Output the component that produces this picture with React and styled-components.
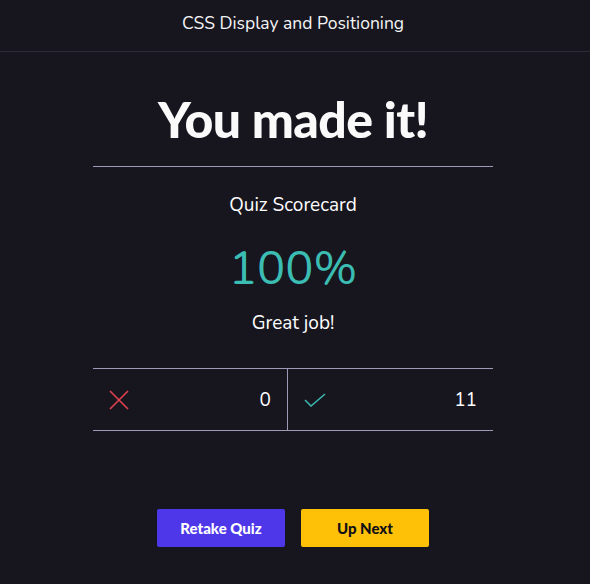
import React from "react";
import styled, { createGlobalStyle } from "styled-components";

const Global = createGlobalStyle`
  html, body { margin: 0; padding: 0; background: #17161f; }
  body { font-family: "Nunito", Lato, "Noto Sans", sans-serif; color: #fff; }
  * { box-sizing: border-box; }
`;

const Page = styled.div`
  min-height: 584px;
  background: #17161f;
`;

const Header = styled.header`
  height: 52px;
  border-bottom: 1px solid #2c2b36;
  display: flex;
  align-items: center;
  justify-content: center;
  font-size: 17.5px;
  color: #f4f4f6;
  padding: 0 4px 5px 0;
`;

const Body = styled.div`
  padding-right: 4px;
`;

const Main = styled.main`
  width: 400px;
  margin: 0 auto;
  display: flex;
  flex-direction: column;
  align-items: stretch;
  text-align: center;
`;

const Title = styled.h1`
  margin: 36px 0 0;
  font-family: Lato, sans-serif;
  font-weight: 900;
  font-size: 50px;
  line-height: 62px;
  letter-spacing: -0.6px;
  color: #fafafa;
  padding-bottom: 16px;
  border-bottom: 1px solid #9d9bb8;
`;

const Subtitle = styled.div`
  margin-top: 26px;
  font-size: 19px;
  line-height: 24px;
`;

const Percent = styled.div`
  margin-top: 24px;
  font-size: 47px;
  line-height: 56px;
  font-weight: 400;
  color: #3bbdb3;
`;

const Message = styled.div`
  margin-top: 14px;
  font-size: 19px;
  line-height: 24px;
`;

const Stats = styled.div`
  margin-top: 33px;
  display: grid;
  grid-template-columns: 194px 1fr;
  border-top: 1px solid #9d9bb8;
  border-bottom: 1px solid #9d9bb8;
`;

const Stat = styled.div`
  height: 61px;
  display: flex;
  align-items: center;
  justify-content: space-between;
  padding: 0 16px;
  font-size: 19px;
  border-left: ${(p) => (p.$divider ? "1px solid #9d9bb8" : "none")};
`;

const Buttons = styled.div`
  margin-top: 78px;
  display: flex;
  justify-content: center;
  gap: 16px;
`;

const Button = styled.button`
  width: 128px;
  height: 38px;
  border: none;
  border-radius: 2px;
  font-family: Lato, sans-serif;
  font-weight: 900;
  font-size: 15px;
  cursor: pointer;
  background: ${(p) => (p.$primary ? "#4d37e8" : "#ffc107")};
  color: ${(p) => (p.$primary ? "#ffffff" : "#111016")};
`;

const XIcon = () => (
  <svg width="20" height="20" viewBox="0 0 20 20" fill="none">
    <path d="M1 1 L19 19 M19 1 L1 19" stroke="#e2424f" strokeWidth="1.6" />
  </svg>
);

const CheckIcon = () => (
  <svg width="22" height="14" viewBox="0 0 22 14" fill="none">
    <path d="M1 7 L7 13 L21 1" stroke="#3bb5ad" strokeWidth="1.6" />
  </svg>
);

export default function App() {
  return (
    <Page>
      <Global />
      <Header>CSS Display and Positioning</Header>
      <Body>
        <Main>
          <Title>You made it!</Title>
          <Subtitle>Quiz Scorecard</Subtitle>
          <Percent>100%</Percent>
          <Message>Great job!</Message>
          <Stats>
            <Stat>
              <XIcon />
              <span>0</span>
            </Stat>
            <Stat $divider>
              <CheckIcon />
              <span>11</span>
            </Stat>
          </Stats>
          <Buttons>
            <Button $primary>Retake Quiz</Button>
            <Button>Up Next</Button>
          </Buttons>
        </Main>
      </Body>
    </Page>
  );
}
